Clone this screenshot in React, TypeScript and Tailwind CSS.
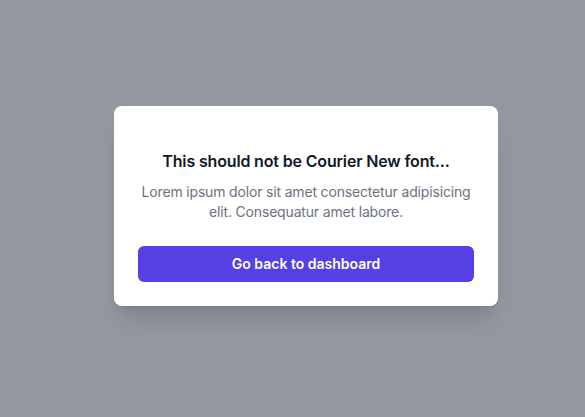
export default function App() {
  return (
    <div
      className="flex min-h-[417px] w-full items-center justify-center bg-[#9597a1] pb-[5px] pl-[27px]"
      style={{ fontFamily: 'Inter, "Noto Sans", sans-serif' }}
    >
      <div className="w-[384px] rounded-lg bg-white px-6 pb-6 pt-[43px] text-center shadow-xl">
        <h3 className="text-base font-semibold leading-6 tracking-[-0.01em] text-[#111827]">
          This should not be Courier New font...
        </h3>
        <p className="mt-[9px] text-sm leading-5 tracking-[-0.012em] text-[#6b7280]">
          Lorem ipsum dolor sit amet consectetur adipisicing elit. Consequatur amet labore.
        </p>
        <button
          type="button"
          className="mt-6 flex h-9 w-full items-center justify-center rounded-md bg-[#5541e3] text-sm font-semibold text-white"
        >
          Go back to dashboard
        </button>
      </div>
    </div>
  );
}
